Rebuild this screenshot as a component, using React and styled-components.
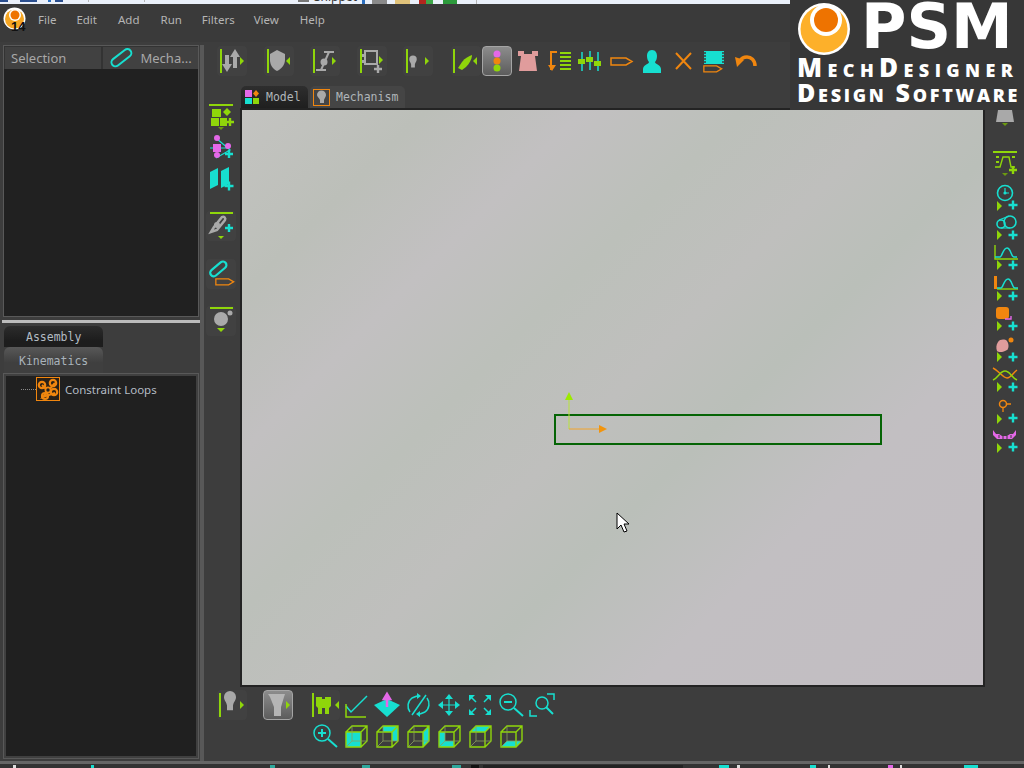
import React from 'react'
import styled, { createGlobalStyle } from 'styled-components'

const LIME = '#8fd60a'
const CYAN = '#17dfd0'
const ORANGE = '#f0860f'
const PINK = '#e468e8'
const GREY = '#a9a9a9'
const ROSE = '#e09c9c'

const GlobalStyle = createGlobalStyle`
  html, body { margin: 0; padding: 0; background: #3c3c3c; }
  * { box-sizing: border-box; }
`

const Frame = styled.div`
  width: 1024px;
  height: 768px;
  position: relative;
  overflow: hidden;
  display: flex;
  flex-direction: column;
  background: #3d3d3d;
  font-family: "Noto Sans", "Liberation Sans", sans-serif;
`

const Strip = styled.div`
  height: ${props => props.$h}px;
  flex: none;
  display: flex;
  overflow: hidden;
  background: ${props => props.$bg};
`
const Mark = styled.span`
  flex: none;
  margin-left: ${props => props.$gap}px;
  width: ${props => props.$w}px;
  height: ${props => props.$hh || 2}px;
  margin-top: ${props => props.$top || 0}px;
  background: ${props => props.$c};
`
const StripText = styled.span`
  flex: none;
  width: 46px;
  margin-left: 5px;
  margin-top: -10px;
  font-size: 12px;
  line-height: 14px;
  color: #333;
`

const MenuBar = styled.div`
  height: 38px;
  flex: none;
  display: flex;
  align-items: flex-start;
  padding: 3px 0 0 3px;
  background: #3a3a3a;
`
const MenuItem = styled.span`
  margin-left: ${props => props.$gap}px;
  margin-top: 5px;
  font-size: 11.5px;
  line-height: 16px;
  color: #b5b5b5;
`

const Main = styled.div`
  height: 719px;
  flex: none;
  display: flex;
`

const LeftColumn = styled.div`
  width: 200px;
  flex: none;
  display: flex;
  flex-direction: column;
  padding: 3px 1px 0 3px;
`
const Panel = styled.div`
  height: 272px;
  flex: none;
  border: 1px solid #595959;
  background: #212121;
`
const PanelHeader = styled.div`
  height: 23px;
  display: flex;
  gap: 2px;
  padding: 1px 0 0 1px;
  background: #333;
`
const PanelTab = styled.div`
  flex: 1;
  min-width: 0;
  display: flex;
  align-items: center;
  gap: 8px;
  padding-left: 6px;
  background: #414141;
  font-size: 13px;
  color: #a8a8a8;
`
const Splitter = styled.div`
  height: 3px;
  flex: none;
  margin: 3px 0 0 -1px;
  width: 198px;
  background: #bcbcbc;
`
const BottomTabs = styled.div`
  height: 50px;
  flex: none;
  display: flex;
  flex-direction: column;
  padding: 3px 0 0 1px;
`
const DockTab = styled.div`
  width: 99px;
  height: ${props => props.$h}px;
  padding: ${props => (props.$active ? '5px 0 0 15px' : '2px 0 0 22px')};
  border-radius: 6px 6px 0 0;
  background: ${props => (props.$active
    ? 'linear-gradient(#585858, #3f3f3f 60%)'
    : 'linear-gradient(#2c2c2c, #1d1d1d 70%)')};
  font-family: "DejaVu Sans Mono", "Liberation Mono", monospace;
  font-size: 11.5px;
  line-height: 18px;
  color: ${props => (props.$active ? '#a9b3bb' : '#b3bcc4')};
`
const TreePanel = styled.div`
  height: 386px;
  flex: none;
  border: 1px solid #595959;
  padding: 2px;
  background: #404040;
`
const TreeBody = styled.div`
  height: 100%;
  padding-top: 1px;
  background: #202020;
`
const TreeRow = styled.div`
  display: flex;
  align-items: center;
  height: 24px;
  padding-left: 15px;
  font-size: 11.5px;
  color: #b4bcc4;
`
const TreeDots = styled.span`
  width: 15px;
  border-top: 1px dotted #8a8a8a;
`
const TreeLabel = styled.span`
  margin-left: 5px;
`

const Workspace = styled.div`
  flex: 1;
  min-width: 0;
  display: flex;
  flex-direction: column;
  border-left: 4px solid #585858;
  margin-top: 3px;
`
const TopBar = styled.div`
  height: 30px;
  margin-top: 1px;
  flex: none;
  display: flex;
  padding-left: 13px;
`
const ToolGroup = styled.div`
  display: flex;
  gap: ${props => props.$gap}px;
  margin-left: ${props => props.$ml || 0}px;
`
const ToolButton = styled.div`
  flex: none;
  width: ${props => props.$w || 30}px;
  height: ${props => props.$h || 30}px;
  margin-top: ${props => props.$mt || 0}px;
  margin-left: ${props => props.$ml || 0}px;
  border-radius: 4px;
  border: 1px solid ${props => (props.$active ? '#a5a5a5' : 'transparent')};
  background: ${props => (props.$active
    ? 'linear-gradient(#8c8c8c, #5c5c5c)'
    : props.$plain ? 'transparent' : '#414141')};
  svg { display: block; margin: -1px; }
`
const MidRow = styled.div`
  height: 602px;
  margin-top: 10px;
  flex: none;
  display: flex;
`
const SideBar = styled.div`
  width: 36px;
  flex: none;
  padding: 17px 0 0 2px;
`
const RightBar = styled.div`
  flex: 1;
  min-width: 0;
  padding: 22px 0 0 5px;
`
const CanvasColumn = styled.div`
  width: 745px;
  flex: none;
  display: flex;
  flex-direction: column;
`
const TabRow = styled.div`
  height: 22px;
  flex: none;
  display: flex;
  gap: 2px;
  padding-left: 1px;
`
const ViewTab = styled.div`
  display: flex;
  align-items: center;
  gap: ${props => props.$gap}px;
  width: ${props => props.$w}px;
  padding-left: 3px;
  border-radius: 5px 5px 0 0;
  background: ${props => (props.$active ? 'linear-gradient(#2e2e2e, #1f1f1f)' : '#454545')};
  font-family: "DejaVu Sans Mono", "Liberation Mono", monospace;
  font-size: 11.5px;
  color: #b0b6ba;
`
const CanvasFrame = styled.div`
  height: 579px;
  flex: none;
  border: 2px solid #232323;
`
const Canvas = styled.div`
  position: relative;
  height: 100%;
  background: linear-gradient(135deg,
    #c3c3c0 0%, #bcbfb9 14%, #c2c0c1 26%, #bcc0ba 38%,
    #bfbfbd 50%, #babfb9 60%, #c2bfc2 74%, #c2bdc2 100%);
`
const Profile = styled.div`
  position: absolute;
  left: 312px;
  top: 304px;
  width: 328px;
  height: 31px;
  border: 2px solid #056405;
`
const Overlay = styled.svg`
  position: absolute;
  left: ${props => props.$x}px;
  top: ${props => props.$y}px;
`
const BottomBar = styled.div`
  display: grid;
  grid-template-columns: repeat(8, 31px);
  grid-auto-rows: 31px;
  padding: 2px 0 0 106px;
  position: relative;
`
const LeftTools = styled.div`
  position: absolute;
  left: 13px;
  top: 2px;
  display: flex;
  gap: 16px;
`

const BadgeBox = styled.div`
  position: absolute;
  right: 0;
  top: 0;
  width: 234px;
  height: 110px;
  background: #373737;
  color: #fff;
  display: grid;
  grid-template-columns: 64px 1fr;
  grid-template-rows: 55px 25px 26px;
  padding-left: 7px;
  font-family: "Open Sans", "Liberation Sans", sans-serif;
  font-weight: 800;
`
const BadgeMark = styled.div`
  font-family: "DejaVu Sans", sans-serif;
  font-size: 62px;
  line-height: 54px;
  white-space: nowrap;
`
const BadgeLine = styled.div`
  grid-column: 1 / 3;
  font-variant: small-caps;
  font-size: ${props => props.$size}px;
  letter-spacing: ${props => props.$ls}px;
  line-height: 24px;
  white-space: nowrap;
`

const Icon = ({ children, w = 30, h = 30 }) => (
  <svg width={w} height={h} viewBox={`0 0 ${w} ${h}`}>{children}</svg>
)
const Bar = ({ x = 3, y1 = 3, y2 = 27 }) => <rect x={x} y={y1} width="2" height={y2 - y1} fill={LIME} />
const HBar = ({ y = 1, x1 = 3, x2 = 27 }) => <rect x={x1} y={y} width={x2 - x1} height="2" fill={LIME} />
const TriR = ({ x = 23, y = 15, s = 4, c = LIME }) => <polygon points={`${x},${y - s} ${x + s},${y} ${x},${y + s}`} fill={c} />
const TriL = ({ x = 26, y = 15, s = 4, c = LIME }) => <polygon points={`${x},${y - s} ${x - s},${y} ${x},${y + s}`} fill={c} />
const TriD = ({ x = 15, y = 26, s = 4, c = LIME }) => <polygon points={`${x - s},${y} ${x + s},${y} ${x},${y + s}`} fill={c} />
const Plus = ({ x = 23, y = 24, s = 5, c = CYAN }) => (
  <path d={`M${x - s} ${y}H${x + s}M${x} ${y - s}V${y + s}`} stroke={c} strokeWidth="2.4" fill="none" />
)
const Bulb = ({ x = 15, y = 15, k = 1, c = GREY }) => (
  <path transform={`translate(${x} ${y}) scale(${k})`} d="M-5 -5a5 5 0 0 1 10 0c0 3-2 4-2.500 7v4h-5v-4c-.5-3-2.500-4-2.500-7z" fill={c} />
)
const Pencil = ({ x = 0, y = 0, k = 1 }) => (
  <path transform={`translate(${x} ${y}) scale(${k})`} d="M1 1h15l6 3.500-6 3.500H1z" fill="none" stroke={ORANGE} strokeWidth="1.500" />
)

const topIcons = [
  <Icon><Bar /><path d="M7 9h4v9h3l-5 8-5-8h3z" transform="translate(1 0)" fill={GREY} /><path d="M18 3l5 8h-3v11h-4V11h-3z" fill={GREY} /><TriR /></Icon>,
  <Icon><Bar /><path d="M6 8l7-4 8 4v6c0 5-4 9-8 11-4-2-7-6-7-11z" fill={GREY} /><TriL /></Icon>,
  <Icon><Bar /><path d="M14 6h10M6 24h10M19 6l-8 18" stroke={GREY} strokeWidth="2" fill="none" /><circle cx="14" cy="16" r="3.500" fill={GREY} /><TriR x={22} /></Icon>,
  <Icon><Bar /><rect x="8" y="5" width="12" height="13" fill="none" stroke={GREY} strokeWidth="2" /><rect x="5" y="8" width="4" height="3" fill={GREY} /><rect x="5" y="14" width="4" height="3" fill={GREY} /><Plus x={21} y={23} s={4} c={GREY} /><TriR x={22} y={14} /></Icon>,
  <Icon><Bar /><Bulb x={10} y={17} k={0.75} /><TriR x={22} /></Icon>,
  <Icon><Bar x={2} /><path d="M7 22l4-6c3-4 7-6 10-7 0 4-3 9-6 12l-4 3z" fill={LIME} /><TriL /></Icon>,
  <Icon><circle cx="15" cy="8" r="3.500" fill={PINK} /><circle cx="15" cy="15" r="3.500" fill={ORANGE} /><circle cx="15" cy="22" r="3.500" fill={LIME} /></Icon>,
  <Icon><path d="M5 5h6v3h8V5h6v5h-3l2 15H6l2-15H5z" fill={ROSE} /></Icon>,
  <Icon><path d="M13 6H7v18" stroke={ORANGE} strokeWidth="2" fill="none" /><path d="M4 19h8l-4 6z" fill={ORANGE} /><path d="M16 7h11M16 11h11M16 15h11M16 19h11M16 23h11" stroke={LIME} strokeWidth="2" /></Icon>,
  <Icon><path d="M7 6v19M15 5v19M23 6v19" stroke={CYAN} strokeWidth="1.500" /><rect x="3" y="13" width="7" height="5" fill={LIME} /><rect x="11" y="11" width="7" height="5" fill={LIME} /><rect x="19" y="15" width="7" height="5" fill={LIME} /></Icon>,
  <Icon><Pencil x={4} y={11} /></Icon>,
  <Icon><path d="M15 4c3.500 0 5 3 5 6 0 3-1 5-2 6 0 2 6 3 6 7v4H6v-4c0-4 6-5 6-7-1-1-2-3-2-6 0-3 1.500-6 5-6z" fill={CYAN} /></Icon>,
  <Icon><path d="M8 7l15 16M23 7L8 23" stroke={ORANGE} strokeWidth="2" /></Icon>,
  <Icon><rect x="5" y="5" width="20" height="13" fill={CYAN} /><path d="M5 7h20M5 10h20M5 13h20M5 16h20" stroke="#3c3c3c" strokeDasharray="2 16" strokeWidth="1.500" /><Pencil x={4} y={19} k={0.85} /></Icon>,
  <Icon><path d="M25 20c0-6-4-9-8-9-3 0-6 2-7 4" stroke={ORANGE} strokeWidth="3.500" fill="none" /><path d="M5 11l9 3-7 7z" fill={ORANGE} /></Icon>,
]

const sideIcons = [
  { mt: 0, icon: <Icon><HBar y={1} /><rect x="6" y="6" width="9" height="8" fill={LIME} /><path d="M21 5l4 4-4 4-4-4z" fill={LIME} /><rect x="5" y="15" width="8" height="8" fill={LIME} /><rect x="14" y="15" width="7" height="8" fill={LIME} /><Plus x={24} y={19} c={LIME} s={4} /><TriD x={15} y={24} s={3} c="#6c9a10" /></Icon> },
  { mt: 1, icon: <Icon><path d="M10 4l14 12-14 8M4 14h18" stroke={CYAN} strokeWidth="1.200" fill="none" /><circle cx="11" cy="4" r="3" fill={PINK} /><rect x="7" y="10" width="8" height="8" fill={PINK} /><circle cx="22" cy="12" r="3" fill={PINK} /><circle cx="11" cy="21" r="3" fill={PINK} /><Plus x={23} y={20} s={4} /></Icon> },
  { mt: 0, icon: <Icon><path d="M4 8l8-4v17l-8 4zM15 7l8-4v17l-8 4z" fill={CYAN} /><Plus x={23} y={22} s={4.500} /></Icon> },
  { mt: 17, icon: <Icon><HBar y={1} x1={4} x2={27} /><path d="M5 21l3-5 8-10c2-1 4 1 3 3l-8 10z" fill="none" stroke={GREY} strokeWidth="2.500" /><circle cx="11" cy="14" r="3" fill={GREY} /><Plus x={23} y={17} s={4} /><TriD x={15} y={25} s={3} /></Icon> },
  { mt: 18, icon: <Icon><rect x="3" y="6" width="19" height="7" rx="3.500" transform="rotate(-40 13 10)" fill="none" stroke={CYAN} strokeWidth="2.200" /><Pencil x={9} y={19} k={0.85} /></Icon> },
  { mt: 17, icon: <Icon><HBar y={1} x1={4} x2={27} /><circle cx="15" cy="13" r="7" fill={GREY} /><circle cx="24" cy="7" r="2.500" fill={GREY} /><TriD x={15} y={22} s={4} /></Icon> },
]

const rightIcons = [
  { mt: 12, icon: <Icon><HBar y={1} x1={3} x2={27} /><path d="M5 17h5l3-10h6l2 10h4" fill="none" stroke={LIME} strokeWidth="1.400" /><path d="M6 7h3M6 12h3M22 7h3" stroke={LIME} strokeWidth="2" /><Plus x={23} y={20} c={LIME} s={4} /><TriD x={15} y={23} s={3} c="#6c9a10" /></Icon> },
  { mt: 3, icon: <Icon><circle cx="15" cy="10" r="7.500" fill="none" stroke={CYAN} strokeWidth="1.600" /><path d="M15 10V5M15 10h4" stroke={CYAN} strokeWidth="1.200" /><circle cx="15" cy="10" r="1.600" fill={CYAN} /><TriR x={7} y={23} s={5} /><Plus x={23} y={22} s={4.500} /></Icon> },
  { mt: 1, icon: <Icon><circle cx="11" cy="10" r="4" fill="none" stroke={CYAN} strokeWidth="1.600" /><circle cx="20" cy="8" r="6" fill="none" stroke={CYAN} strokeWidth="1.600" /><path d="M9 6l10-4M11 14l9 0" stroke={CYAN} strokeWidth="1.200" /><TriR x={7} y={21} s={5} /><Plus x={23} y={21} s={4.500} /></Icon> },
  { mt: 0, icon: <Icon><path d="M5 1v14h23" stroke={LIME} strokeWidth="1.400" fill="none" /><path d="M5 13h5c2 0 3-9 7-9s4 9 7 9h3" stroke={CYAN} strokeWidth="1.500" fill="none" /><TriR x={7} y={21} s={5} /><Plus x={23} y={21} s={4.500} /></Icon> },
  { mt: 1, icon: <Icon><rect x="4" y="1" width="3" height="13" fill={ORANGE} /><path d="M7 14h21" stroke={LIME} strokeWidth="1.400" /><path d="M7 13h4c2 0 3-9 7-9s4 9 7 9h3" stroke={CYAN} strokeWidth="1.500" fill="none" /><TriR x={7} y={21} s={5} /><Plus x={23} y={21} s={4.500} /></Icon> },
  { mt: 0, icon: <Icon><rect x="6" y="2" width="13" height="12" rx="3" fill={ORANGE} /><path d="M15 14h6v-3" stroke={PINK} strokeWidth="1.400" fill="none" /><TriR x={7} y={21} s={5} /><Plus x={23} y={21} s={4.500} /></Icon> },
  { mt: 1, icon: <Icon><path d="M8 6c2-3 7-3 9-1 2 3 2 7 0 9-3 2-8 3-10 1-1-3-1-6 1-9z" fill={ROSE} /><circle cx="21" cy="4" r="2.500" fill={ORANGE} /><TriR x={7} y={21} s={5} /><Plus x={23} y={21} s={4.500} /></Icon> },
  { mt: 0, icon: <Icon><path d="M3 2c6 3 10 10 14 10s6-5 10-8" stroke={ORANGE} strokeWidth="1.500" fill="none" /><path d="M3 14c6-3 7-9 12-9s6 6 12 9" stroke={LIME} strokeWidth="1.500" fill="none" /><TriR x={7} y={21} s={5} /><Plus x={23} y={21} s={4.500} /></Icon> },
  { mt: 1, icon: <Icon><circle cx="13" cy="7" r="3.500" fill="none" stroke={ORANGE} strokeWidth="1.500" /><path d="M13 11v4M17 7h4" stroke={ORANGE} strokeWidth="1.300" /><TriR x={7} y={22} s={5} /><Plus x={23} y={21} s={4.500} /></Icon> },
  { mt: 0, icon: <Icon><path d="M3 3l3 4h3l3 2h5l3-2h3l3-4v5l-4 4H7L3 8z" fill={PINK} /><path d="M9 8v3M13 9v3M17 9v3M21 8v3" stroke="#3d3d3d" /><TriR x={7} y={21} s={5} /><Plus x={23} y={20} s={4.500} /></Icon> },
]

const Cube = ({ face }) => (
  <Icon>
    <polygon points={face} fill={CYAN} />
    <path d="M5 11h15v15H5zM5 11l6-6h15v15l-6 6M20 11l6-6" fill="none" stroke={LIME} strokeWidth="1.400" />
    <path d="M5 26l6-6h15M11 5v15" fill="none" stroke="#8aa060" strokeWidth="0.800" />
  </Icon>
)

const viewIcons = [
  <Icon><Bar x={2} /><path d="M7 7h6v2h3V7h6v9l-2 2v6h-4v-6h-3v6H9v-6l-2-2z" fill={LIME} transform="translate(-1 0)" /><TriL x={29} /></Icon>,
  <Icon><path d="M5 16l5 6L26 6" fill="none" stroke={CYAN} strokeWidth="1.500" /><path d="M5 14v13h20" fill="none" stroke={LIME} strokeWidth="1.500" /></Icon>,
  <Icon><path d="M2 15l13-6 13 6-13 12z" fill={CYAN} /><path d="M15 17V7M12 9l3-5 3 5z" stroke={PINK} strokeWidth="2.500" fill={PINK} /></Icon>,
  <Icon><path d="M7 22a10 10 0 0 1 2-14l5-2M24 8a10 10 0 0 1-2 14l-5 2M9 25L23 5" fill="none" stroke={CYAN} strokeWidth="1.500" /><path d="M14 3v6l4-3zM17 27v-6l-4 3z" fill={CYAN} /></Icon>,
  <Icon><path d="M15 6v18M6 15h18" stroke={CYAN} strokeWidth="1.200" /><path d="M11 9l4-5 4 5zM11 21l4 5 4-5zM9 11l-5 4 5 4zM21 11l5 4-5 4z" fill={CYAN} /></Icon>,
  <Icon><path d="M5 6l6 6M25 6l-6 6M5 24l6-6M25 24l-6-6" stroke={CYAN} strokeWidth="1.500" /><path d="M4 5h6l-6 6zM26 5h-6l6 6zM4 25h6l-6-6zM26 25h-6l6-6z" fill={CYAN} /></Icon>,
  <Icon><circle cx="12" cy="12" r="8" fill="none" stroke={CYAN} strokeWidth="1.500" /><path d="M8 12h8" stroke={CYAN} strokeWidth="2" /><path d="M18 18l9 8" stroke={CYAN} strokeWidth="2" /></Icon>,
  <Icon><circle cx="15" cy="13" r="6" fill="none" stroke={CYAN} strokeWidth="1.500" /><path d="M19 17l7 7" stroke={CYAN} strokeWidth="2" /><path d="M20 4h7v6M10 26H3v-6" fill="none" stroke={CYAN} strokeWidth="1.500" /></Icon>,
]
const cubeRow = [
  <Icon><circle cx="12" cy="12" r="8" fill="none" stroke={CYAN} strokeWidth="1.500" /><path d="M8 12h8M12 8v8" stroke={CYAN} strokeWidth="2" /><path d="M18 18l9 8" stroke={CYAN} strokeWidth="2" /></Icon>,
  <Cube face="5,11 20,11 20,26 5,26" />,
  <Cube face="11,5 26,5 26,20 20,20 20,11 11,11" />,
  <Cube face="20,11 26,5 26,20 20,26" />,
  <Cube face="5,11 11,11 11,20 20,20 20,26 5,26" />,
  <Cube face="5,11 11,5 26,5 20,11" />,
  <Cube face="5,26 11,20 26,20 20,26" />,
]

const topMarks = [
  [0, 8, '#2b4f8f'], [12, 17, '#2b4f8f'], [11, 3, '#2b6fc0'], [4, 8, '#2b4f8f'], [25, 1, '#b5b5b5'], [55, 1, '#b5b5b5'],
  [153, 11, '#777'],
]
const topMarks2 = [
  [2, 3, '#2b6fc0'], [7, 15, '#8a8a8a'], [8, 15, '#e0c27a'], [9, 7, '#b3261e'], [0, 7, '#3fa84a'], [10, 14, '#2c9a3c'], [19, 1, '#b5b5b5'],
]
const statusMarks = [
  [13, 3, '#ddd'], [75, 3, CYAN], [176, 5, '#2ea89c'], [87, 8, '#2ea89c'], [82, 9, '#2ea89c'], [10, 8, '#111'],
  [4, 200, '#222'], [36, 10, CYAN], [8, 3, '#ddd'], [70, 6, CYAN], [12, 2, '#ddd'], [58, 5, PINK], [7, 2, '#ddd'], [62, 14, CYAN],
]

export default function App() {
  return (
    <>
      <GlobalStyle />
      <Frame>
        <Strip $h={4} $bg="#eaf0fa">
          {topMarks.map(([g, w, c], i) => <Mark key={i} $gap={g} $w={w} $c={c} />)}
          <StripText>Snippet</StripText>
          {topMarks2.map(([g, w, c], i) => <Mark key={i} $gap={g} $w={w} $c={c} $hh={4} />)}
        </Strip>

        <MenuBar>
          <svg width="26" height="28" viewBox="0 0 26 28">
            <circle cx="11.500" cy="11.500" r="11" fill="#fff" />
            <circle cx="11.500" cy="12" r="9.500" fill="#f5a623" />
            <circle cx="12" cy="8" r="6" fill="#fff" />
            <circle cx="12" cy="8" r="4.500" fill="#ee7300" />
            <text x="8" y="24" fontFamily="Liberation Sans" fontSize="13" fontWeight="700" fill="#111">14</text>
          </svg>
          <MenuItem $gap={9}>File</MenuItem>
          <MenuItem $gap={20}>Edit</MenuItem>
          <MenuItem $gap={21}>Add</MenuItem>
          <MenuItem $gap={21}>Run</MenuItem>
          <MenuItem $gap={20}>Filters</MenuItem>
          <MenuItem $gap={19}>View</MenuItem>
          <MenuItem $gap={21}>Help</MenuItem>
        </MenuBar>

        <Main>
          <LeftColumn>
            <Panel>
              <PanelHeader>
                <PanelTab>Selection</PanelTab>
                <PanelTab>
                  <svg width="24" height="20" viewBox="0 0 24 20">
                    <rect x="1" y="6" width="23" height="8" rx="4" transform="rotate(-38 12 10)" fill="none" stroke={CYAN} strokeWidth="2" />
                  </svg>
                  <span>Mecha...</span>
                </PanelTab>
              </PanelHeader>
            </Panel>
            <Splitter />
            <BottomTabs>
              <DockTab $h={22}>Assembly</DockTab>
              <DockTab $h={27} $active>Kinematics</DockTab>
            </BottomTabs>
            <TreePanel>
              <TreeBody>
                <TreeRow>
                  <TreeDots />
                  <svg width="24" height="24" viewBox="0 0 24 24">
                    <rect x="0.500" y="0.500" width="23" height="23" fill="#2a2118" stroke={ORANGE} />
                    <path d="M6 8l6 6 7-8M12 14l-5 6 12-4" stroke={ORANGE} strokeWidth="2" fill="none" />
                    <circle cx="6" cy="8" r="3.200" fill="none" stroke={ORANGE} strokeWidth="2.200" />
                    <circle cx="17" cy="6" r="3.200" fill="none" stroke={ORANGE} strokeWidth="2.200" />
                    <circle cx="12" cy="13" r="2.600" fill="#222" stroke={ORANGE} strokeWidth="1.800" />
                    <circle cx="18" cy="15" r="3.200" fill="none" stroke={ORANGE} strokeWidth="2.200" />
                    <circle cx="9" cy="19" r="3" fill="none" stroke={ORANGE} strokeWidth="2.200" />
                  </svg>
                  <TreeLabel>Constraint Loops</TreeLabel>
                </TreeRow>
              </TreeBody>
            </TreePanel>
          </LeftColumn>

          <Workspace>
            <TopBar>
              <ToolGroup $gap={16.500}>
                {topIcons.slice(0, 5).map((icon, i) => <ToolButton key={i}>{icon}</ToolButton>)}
              </ToolGroup>
              <ToolGroup $gap={1} $ml={18}>
                {topIcons.slice(5).map((icon, i) => (
                  <ToolButton key={i} $active={i === 1} $plain={i > 1}>{icon}</ToolButton>
                ))}
              </ToolGroup>
            </TopBar>

            <MidRow>
              <SideBar>
                {sideIcons.map((item, i) => (
                  <ToolButton key={i} $mt={item.mt} $plain={i < 3}>{item.icon}</ToolButton>
                ))}
              </SideBar>
              <CanvasColumn>
                <TabRow>
                  <ViewTab $w={67} $gap={6} $active>
                    <svg width="16" height="16" viewBox="0 0 16 16">
                      <rect x="1" y="1" width="7" height="7" fill={PINK} />
                      <path d="M12 1l3 3.500-3 3.500-3-3.500z" fill={ORANGE} />
                      <rect x="1" y="9" width="7" height="6" fill={CYAN} />
                      <rect x="9" y="9" width="6" height="6" fill={LIME} />
                    </svg>
                    Model
                  </ViewTab>
                  <ViewTab $w={95} $gap={6}>
                    <svg width="17" height="17" viewBox="0 0 17 17">
                      <rect x="0.500" y="0.500" width="16" height="16" fill="none" stroke={ORANGE} />
                      <path d="M4 6a4.500 4.500 0 0 1 9 0c0 2-1.500 3-2 5v3H7v-3c-.5-2-3-3-3-5z" fill={GREY} />
                    </svg>
                    Mechanism
                  </ViewTab>
                </TabRow>
                <CanvasFrame>
                  <Canvas>
                    <Profile />
                    <Overlay $x={320} $y={281} width="50" height="45" viewBox="0 0 50 45">
                      <path d="M7 6v32" stroke="#b7e23c" />
                      <path d="M7 38h32" stroke="#f2a42c" />
                      <polygon points="7,1 11,9 3,9" fill="#9cea00" />
                      <polygon points="37,34 45,38 37,42" fill="#f2940c" />
                    </Overlay>
                    <Overlay $x={374} $y={402} width="14" height="22" viewBox="0 0 14 22">
                      <path d="M1 1v16l4-4 3 7 3-1-3-7h5z" fill="#fff" stroke="#000" />
                    </Overlay>
                  </Canvas>
                </CanvasFrame>
              </CanvasColumn>
              <RightBar>
                <ToolButton $plain>
                  <Icon>
                    <path d="M8 2h14l2 12H6z" fill={GREY} />
                    <TriD x={15} y={15} s={3} c="#6c9a10" />
                  </Icon>
                </ToolButton>
                {rightIcons.map((item, i) => (
                  <ToolButton key={i} $mt={item.mt} $plain>{item.icon}</ToolButton>
                ))}
              </RightBar>
            </MidRow>

            <BottomBar>
              <LeftTools>
                <ToolButton><Icon><Bar x={2} /><Bulb x={13} y={13} k={1.200} /><TriR x={23} /></Icon></ToolButton>
                <ToolButton $active><Icon><path d="M5 4h17l-1 3-3 10v9h-7V17L7 7z" fill="#b5b5b5" /><TriR x={23} /></Icon></ToolButton>
              </LeftTools>
              {viewIcons.map((icon, i) => <ToolButton key={i} $plain={i > 0}>{icon}</ToolButton>)}
              {cubeRow.map((icon, i) => <ToolButton key={i} $plain>{icon}</ToolButton>)}
            </BottomBar>
          </Workspace>
        </Main>

        <Strip $h={3} $bg="#666" />
        <Strip $h={4} $bg="#333">
          {statusMarks.map(([g, w, c], i) => <Mark key={i} $gap={g} $w={w} $c={c} $top={1} $hh={3} />)}
        </Strip>

        <BadgeBox>
          <svg width="64" height="60" viewBox="0 0 64 60">
            <circle cx="27" cy="29" r="26" fill="#fff" />
            <circle cx="27" cy="29" r="23.500" fill="#fdb02a" />
            <circle cx="29" cy="20" r="16" fill="#fff" />
            <circle cx="29" cy="20" r="12" fill="#ee7300" />
          </svg>
          <BadgeMark>PSM</BadgeMark>
          <BadgeLine $size={26} $ls={5.400}>MechDesigner</BadgeLine>
          <BadgeLine $size={25} $ls={2.700}>Design Software</BadgeLine>
        </BadgeBox>
      </Frame>
    </>
  )
}
